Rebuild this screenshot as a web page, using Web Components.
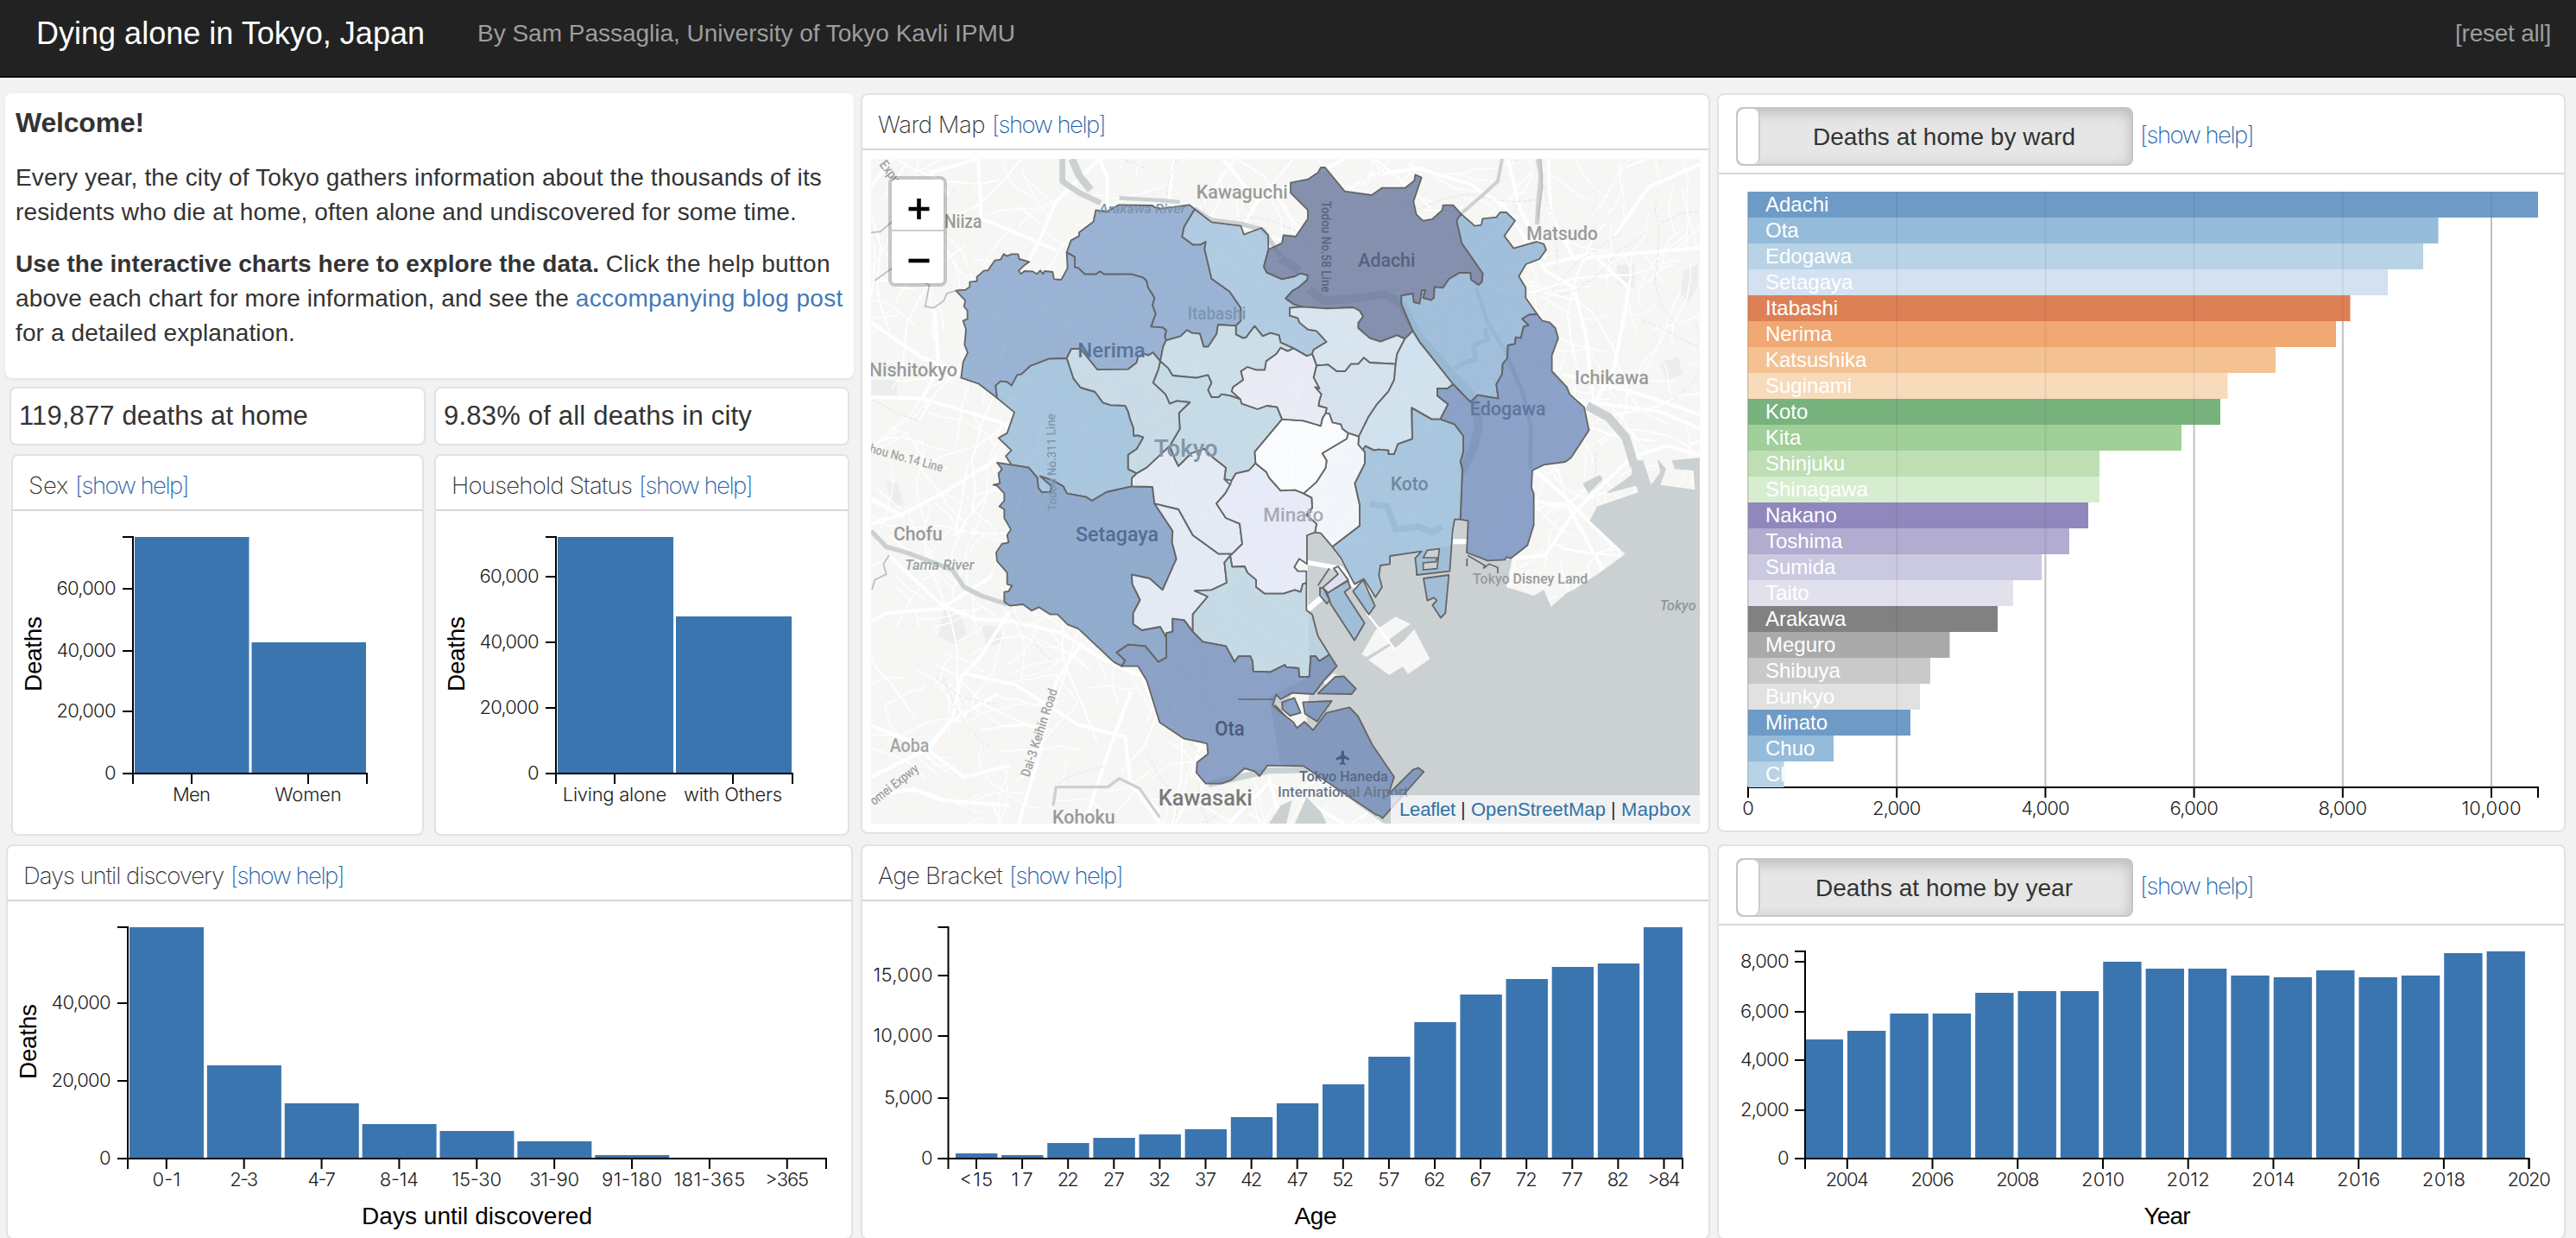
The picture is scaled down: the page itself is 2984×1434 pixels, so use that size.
<!DOCTYPE html>
<html lang="en">
<head>
<meta charset="utf-8">
<title>Dying alone in Tokyo, Japan</title>
<style>
html,body{margin:0;height:1434px;overflow:hidden;background:#f2f2f2}
body{font-family:"Liberation Sans",Arial,sans-serif;font-size:28px;color:#333}
</style>
</head>
<body>
<tokyo-dashboard></tokyo-dashboard>
<script>
const LIGHT = 'Inter,"Liberation Sans",sans-serif';
const BLUE = '#3b75af';

/* one line of text set to a given measure */
customElements.define('fit-line', class extends HTMLElement {
  connectedCallback() {
    if (this.shadowRoot) return;
    this.attachShadow({mode: 'open'}).innerHTML =
      '<style>:host{display:inline-block;white-space:nowrap}span{display:inline-block;white-space:pre}</style><span><slot></slot></span>';
    const span = this.shadowRoot.querySelector('span');
    const want = +this.getAttribute('w');
    const fit = () => {
      const n = this.textContent.length;
      span.style.letterSpacing = '0px';
      const have = span.getBoundingClientRect().width;
      if (want && n && have) span.style.letterSpacing = ((want - have) / n) + 'px';
      if (want) this.style.width = want + 'px';
    };
    fit();
    requestAnimationFrame(fit);
  }
});

customElements.define('top-bar', class extends HTMLElement {
  constructor() {
    super();
    this.attachShadow({mode: 'open'}).innerHTML = `<style>
      :host{display:flex;box-sizing:border-box;height:90px;background:#222;border-bottom:2px solid #060606;padding:0 29px 0 42px;color:#9d9d9d;font-size:28px;align-items:flex-start}
      .t{color:#fff;font-size:36px;line-height:40px;padding-top:19px;margin-right:61px}
      .s{line-height:32px;padding-top:23px;flex:1}
      .r{line-height:32px;padding-top:23px}
    </style><div class="t"><slot name="title"></slot></div><div class="s"><slot name="by"></slot></div><div class="r"><slot name="action"></slot></div>`;
  }
});

customElements.define('welcome-card', class extends HTMLElement {
  constructor() {
    super();
    this.attachShadow({mode: 'open'}).innerHTML = `<style>
      :host{display:block;box-sizing:border-box;height:330px;background:#fff;border-radius:8px;box-shadow:0 2px 3px rgba(0,0,0,.06);padding:16px 0 0 12px}
      h1{font-size:32px;line-height:36px;margin:0 0 26px}
      p{margin:0 0 20px;line-height:40px;white-space:nowrap}
      a{color:#4279b8}
    </style>
    <h1><fit-line w="149">Welcome!</fit-line></h1>
    <p><fit-line w="934">Every year, the city of Tokyo gathers information about the thousands of its</fit-line><br>
    <fit-line w="905">residents who die at home, often alone and undiscovered for some time.</fit-line></p>
    <p><b><fit-line w="676">Use the interactive charts here to explore the data.</fit-line></b> <fit-line w="260">Click the help button</fit-line><br>
    <fit-line w="641">above each chart for more information, and see the</fit-line> <a><fit-line w="310">accompanying blog post</fit-line></a><br>
    <fit-line w="324">for a detailed explanation.</fit-line></p>`;
  }
});

customElements.define('stat-card', class extends HTMLElement {
  constructor() {
    super();
    this.attachShadow({mode: 'open'}).innerHTML = `<style>
      :host{display:flex;align-items:center;box-sizing:border-box;flex:1;height:68px;background:#fff;border:2px solid #e2e2e2;border-radius:8px;padding-left:9px;font-size:31px}
    </style><slot></slot>`;
  }
});

customElements.define('chart-card', class extends HTMLElement {
  constructor() {
    super();
    this.attachShadow({mode: 'open'}).innerHTML = `<style>
      :host{display:block;box-sizing:border-box;background:#fff;border:2px solid #e2e2e2;border-radius:8px;overflow:hidden}
      header{display:flex;box-sizing:border-box;height:64px;border-bottom:2px solid #d6d6d6;padding:6px 0 0 18px;align-items:center;color:#333;font-family:${LIGHT};font-weight:200;gap:8px;font-size:27.500px}
      :host([tall]) header{height:92px;padding:14px 0 0 20px;align-items:flex-start}
      .help{color:#1f63ad}
      :host([tall]) .help{padding-top:14px;line-height:36px}
    </style><header><slot name="title"></slot><span class="help"><fit-line w="131">[show help]</fit-line></span></header><slot></slot>`;
  }
});

customElements.define('flip-switch', class extends HTMLElement {
  constructor() {
    super();
    this.attachShadow({mode: 'open'}).innerHTML = `<style>
      :host{display:flex;box-sizing:border-box;width:460px;height:68px;border:2px solid #c6c6c6;border-radius:8px;background:#e6e6e6;box-shadow:inset 0 4px 16px rgba(0,0,0,.2);font:28px "Liberation Sans",sans-serif;color:#333;overflow:hidden}
      i{width:24px;background:#fff;border-right:2px solid #ccc;border-radius:8px}
      div{flex:1;display:flex;align-items:center;justify-content:center;padding:2px 4px 0 0}
    </style><i></i><div><slot></slot></div>`;
  }
});

const ruler = document.createElement('canvas').getContext('2d');
function measure(t, size) { ruler.font = size + 'px "Liberation Sans"'; return ruler.measureText(t).width; }
function tick(t, x, y, anchor) {
  return `<text class="k" x="${x}" y="${y}" text-anchor="${anchor}" textLength="${(measure(t, 22) * 1.025).toFixed(1)}">${t.replace('<', '&lt;')}</text>`;
}
const CHART_CSS = `:host{display:block}svg{display:block}
  .k{font:300 22px ${LIGHT};fill:#1c1c1c}.t{font:28px "Liberation Sans",sans-serif;fill:#000}
  .w{font:24px "Liberation Sans",sans-serif;fill:#fff}path.a{fill:none;stroke:#000;stroke-width:2}`;

const range = (n, f) => Array.from({length: n}, (_, i) => f(i));
const CHARTS = {
  sex: {box: [15, 592, 474, 374], ax: 154, top: 622, base: 896, end: 425, lx: 134.5,
    y: [['60,000', 682], ['40,000', 754], ['20,000', 824], ['0', 896]],
    x: [['Men', 222], ['Women', 357]],
    bars: [[156, 132.5, 622], [291.5, 132.5, 744]], v: [47.5, 757.5]},
  house: {box: [505, 592, 477, 374], ax: 644, top: 622, base: 896, end: 918, lx: 624.5,
    y: [['60,000', 668], ['40,000', 744], ['20,000', 820], ['0', 896]],
    x: [['Living alone', 712], ['with Others', 849]],
    bars: [[646, 134, 622], [783, 134, 714]], v: [538, 757.5]},
  days: {box: [9, 1044, 977, 390], ax: 148, top: 1074, base: 1342, end: 957, lx: 128.5,
    y: [['40,000', 1162], ['20,000', 1252], ['0', 1342]],
    x: ['0-1', '2-3', '4-7', '8-14', '15-30', '31-90', '91-180', '181-365', '>365'].map((t, i) => [t, 192.8 + i * 89.87]),
    bars: [1074, 1234, 1278, 1302, 1310, 1322, 1338].map((t, i) => [150 + i * 89.87, 86, t]),
    v: [41.5, 1206.5], h: ['Days until discovered', 552.5, 267]},
  age: {box: [999, 1044, 980, 390], ax: 1098.5, top: 1074, base: 1342, end: 1949, lx: 1080.5,
    y: [['15,000', 1130], ['10,000', 1200], ['5,000', 1272], ['0', 1342]],
    x: ['<15', '17', '22', '27', '32', '37', '42', '47', '52', '57', '62', '67', '72', '77', '82', '>84'].map((t, i) => [t, 1131 + i * 53.1]),
    bars: [1336, 1338, 1324, 1318, 1314, 1308, 1294, 1278, 1256, 1224, 1184, 1152, 1134, 1120, 1116, 1074].map((t, i) => [1107 + i * 53.13, i == 15 ? 45 : 48.4, t]),
    h: ['Age', 1524, 49]},
  year: {box: [1991, 1072, 979, 362], ax: 2091, top: 1102, base: 1342, end: 2929.5, lx: 2072.5,
    y: [['8,000', 1114], ['6,000', 1172], ['4,000', 1228], ['2,000', 1286], ['0', 1342]],
    x: range(9, i => ['' + (2004 + 2 * i), 2139.8 + i * 98.73]),
    bars: [1204, 1194, 1174, 1174, 1150, 1148, 1148, 1114, 1122, 1122, 1130, 1132, 1124, 1132, 1130, 1104, 1102].map((t, i) => [i ? 2140 + (i - 1) * 49.37 : 2092, i ? 44.4 : 43, t]),
    h: ['Year', 2510.5, 54]}
};

customElements.define('bar-chart', class extends HTMLElement {
  connectedCallback() {
    if (this.shadowRoot) return;
    const c = CHARTS[this.getAttribute('data')];
    let s = '';
    for (const [x, w, t] of c.bars) s += `<rect x="${x}" y="${t}" width="${w}" height="${c.base - t}" fill="${BLUE}"/>`;
    s += `<path class="a" d="M${c.ax - 12} ${c.top}H${c.ax}V${c.base}H${c.ax - 12}"/>`;
    s += `<path class="a" d="M${c.ax} ${c.base + 12}V${c.base}H${c.end}V${c.base + 12}"/>`;
    for (const [t, y] of c.y) s += `<path class="a" d="M${c.ax - 12} ${y}H${c.ax}"/>` + tick(t, c.lx, y + 6.5, 'end');
    for (const [t, x] of c.x) s += `<path class="a" d="M${x} ${c.base}V${c.base + 12}"/>` + tick(t, x, c.base + 32, 'middle');
    if (c.v) s += `<text class="t" transform="translate(${c.v[0]} ${c.v[1]}) rotate(-90)" text-anchor="middle" textLength="87">Deaths</text>`;
    if (c.h) s += `<text class="t" x="${c.h[1]}" y="1418" text-anchor="middle" textLength="${c.h[2]}">${c.h[0]}</text>`;
    this.attachShadow({mode: 'open'}).innerHTML = `<style>${CHART_CSS}</style><svg width="${c.box[2]}" height="${c.box[3]}" viewBox="${c.box.join(' ')}">${s}</svg>`;
  }
});

const WARDS = [['Adachi', 2940, '#6e9bc6'], ['Ota', 2824.5, '#95bbda'], ['Edogawa', 2807, '#b8d3e5'], ['Setagaya', 2766, '#d4e1f1'],
  ['Itabashi', 2722.5, '#de8055'], ['Nerima', 2706, '#f1a873'], ['Katsushika', 2636, '#f4c292'], ['Suginami', 2580.5, '#f7dbba'],
  ['Koto', 2572, '#78b37e'], ['Kita', 2527, '#a0cf98'], ['Shinjuku', 2432, '#bddfb3'], ['Shinagawa', 2432, '#d7edd0'],
  ['Nakano', 2419, '#9088bc'], ['Toshima', 2397, '#b1acd0'], ['Sumida', 2365, '#cac9e0'], ['Taito', 2332, '#e1e0ed'],
  ['Arakawa', 2314, '#818181'], ['Meguro', 2258.5, '#aaaaaa'], ['Shibuya', 2236, '#c9c9c9'], ['Bunkyo', 2224, '#e1e1e1'],
  ['Minato', 2213, '#6e9bc6'], ['Chuo', 2124, '#95bbda'], ['Chiyoda', 2066.5, '#b8d3e5']];

customElements.define('ward-chart', class extends HTMLElement {
  constructor() {
    super();
    let s = '';
    const xs = range(6, i => 2025 + i * 172.2);
    for (const x of xs) s += `<path d="M${x} 222V912" stroke="#cdcdcd" stroke-width="2"/>`;
    s += `<path class="a" d="M2025 924V912H2940V924"/>`;
    WARDS.forEach(([n, e, f], i) => { s += `<rect x="2025" y="${222 + i * 30}" width="${e - 2025}" height="30" fill="${f}"/>`; });
    for (const x of xs) s += `<path d="M${x} 222V912" stroke="#000" stroke-opacity=".06" stroke-width="2"/>`;
    WARDS.forEach(([n], i) => { s += `<text class="w" x="2045" y="${245 + i * 30}">${n}</text>`; });
    xs.forEach((x, i) => { s += `<path class="a" d="M${x} 912V924"/>` + tick(i ? 2 * i + ',000' : '0', x, 944, 'middle'); });
    this.attachShadow({mode: 'open'}).innerHTML = `<style>${CHART_CSS}</style><svg width="979" height="760" viewBox="1991 202 979 760">${s}</svg>`;
  }
});

/* ward outlines: [fill, outline, outline, ...] */
const MAP = [
 ['#9ab3d3', '838,430 875,437 918,412 1035,414 1042,420 1065,425 1163,412 1182,427 1145,488 1138,523 1175,550 1202,550 1220,540 1216,565 1240,668 1303,713 1342,770 1342,815 1325,832 1263,828 1258,860 1228,905 1213,905 1200,860 1172,857 1155,847 1133,868 1082,883 1078,868 1083,848 1070,838 1030,835 1046,790 1035,760 1042,735 1020,700 1014,675 1003,665 963,653 867,653 852,643 838,653 800,653 778,632 765,628 765,593 737,577 752,535 780,520 780,508 830,470'],
 ['#9ab3d3', '737,577 765,593 765,628 778,632 800,653 838,653 852,643 867,653 963,653 1003,665 1014,675 1020,700 1042,735 1035,760 1046,790 1030,835 1070,838 1083,848 1078,868 1082,883 1072,905 1062,955 1037,925 1020,935 1008,930 985,940 980,960 950,983 843,984 785,912 753,912 737,945 675,947 610,972 580,1000 565,1003 545,1040 530,1027 507,1025 490,1040 495,1083 430,1033 370,1013 377,958 393,925 382,898 387,845 377,815 392,808 392,780 380,765 385,745 352,710 385,707 400,697 400,680 425,677 425,662 450,640 463,640 487,605 507,602 518,583 530,590 545,583 568,583 572,600 607,610 590,622 570,640 578,652 590,642 618,643 633,652 645,640 655,652 660,642 688,645 693,670 718,672 740,632'],
 ['#b0cbe1', '1182,427 1240,472 1342,485 1353,515 1413,492 1437,517 1438,567 1422,627 1432,647 1485,670 1530,660 1550,650 1575,657 1573,672 1545,697 1520,712 1498,737 1525,757 1555,766 1512,770 1512,797 1540,805 1545,820 1575,845 1605,850 1640,888 1595,915 1590,930 1572,937 1525,910 1480,890 1475,865 1445,857 1418,868 1390,833 1360,873 1350,875 1325,862 1325,832 1342,815 1342,770 1303,713 1240,668 1216,565 1220,540 1202,550 1175,550 1138,523 1145,488'],
 ['#8490ae', '1438,567 1485,545 1490,517 1533,522 1575,460 1575,430 1515,370 1515,335 1575,323 1610,300 1620,282 1635,282 1703,365 1797,378 1832,353 1913,353 1945,328 1948,307 1970,317 1942,400 1952,445 1975,467 2007,462 2042,430 2045,413 2080,413 2107,443 2092,467 2110,545 2183,650 2180,680 2168,690 2142,672 2140,648 2102,648 2065,670 2045,700 2015,697 2013,735 2003,743 1975,735 1983,708 1972,708 1963,755 1943,750 1940,720 1900,727 1900,757 1940,850 1912,877 1885,865 1827,887 1790,875 1750,840 1750,822 1767,800 1755,780 1733,768 1640,772 1555,766 1525,757 1498,737 1520,712 1545,697 1573,672 1575,657 1550,650 1530,660 1485,670 1432,647 1422,627'],
 ['#d8e4ee', '1555,766 1640,772 1733,768 1755,780 1767,800 1750,822 1750,840 1790,875 1827,887 1885,865 1912,877 1885,930 1880,965 1790,960 1770,943 1750,965 1725,965 1705,990 1675,990 1645,967 1605,970 1595,940 1590,930 1595,915 1640,888 1605,850 1575,845 1545,820 1540,805 1512,797 1512,770'],
 ['#d5e2ed', '1605,970 1645,967 1675,990 1705,990 1725,965 1750,965 1770,943 1790,960 1880,965 1875,1020 1855,1060 1815,1105 1785,1150 1752,1217 1715,1205 1695,1190 1690,1175 1660,1168 1650,1138 1637,1135 1640,1118 1612,1110 1615,1092 1622,1070 1600,1045 1615,1050 1595,1012'],
 ['#d1e1ec', '1940,850 1912,877 1885,930 1880,965 1875,1020 1855,1060 1815,1105 1785,1150 1752,1217 1750,1245 1765,1265 1775,1250 1805,1265 1820,1262 1855,1265 1855,1278 1875,1278 1888,1243 1938,1225 1936,1117 2005,1157 2035,1157 2062,1105 2025,1075 2025,1050 2060,1050 2080,1035 1965,890'],
 ['#a1bfda', '2107,443 2155,485 2178,482 2182,460 2230,455 2243,438 2265,438 2295,467 2258,520 2290,563 2370,540 2395,548 2403,568 2380,600 2333,618 2308,660 2332,700 2332,735 2372,792 2345,793 2320,808 2342,830 2325,835 2315,875 2297,872 2295,895 2270,900 2268,945 2252,965 2250,1000 2230,1035 2237,1085 2165,1073 2140,1097 2080,1035 1965,890 1940,850 1900,757 1900,727 1940,720 1943,750 1963,755 1972,708 1983,708 1975,735 2003,743 2013,735 2015,697 2045,700 2065,670 2102,648 2140,648 2142,672 2168,690 2180,680 2183,650 2110,545 2092,467'],
 ['#8ba1c7', '2372,792 2390,815 2415,820 2435,840 2445,875 2423,935 2423,990 2475,1045 2485,1070 2535,1115 2552,1195 2490,1290 2470,1305 2395,1315 2355,1335 2352,1395 2360,1415 2360,1525 2338,1595 2280,1640 2265,1636 2260,1645 2200,1648 2127,1620 2132,1510 2105,1505 2112,1330 2105,1305 2115,1270 2115,1215 2085,1175 2035,1157 2062,1105 2025,1075 2025,1050 2060,1050 2080,1035 2140,1097 2165,1073 2237,1085 2230,1035 2250,1000 2252,965 2268,945 2270,900 2295,895 2297,872 2315,875 2325,835 2342,830 2320,808 2345,793'],
 ['#a9c6de', '1936,1117 2005,1157 2035,1157 2085,1175 2115,1215 2115,1270 2105,1305 2112,1330 2105,1505 2085,1505 2078,1545 2068,1685 1953,1698 1953,1682 1948,1640 1970,1616 1860,1632 1860,1660 1827,1665 1822,1700 1833,1740 1810,1775 1770,1712 1737,1730 1690,1640 1660,1600 1755,1527 1755,1455 1738,1380 1773,1310 1773,1270 1765,1265 1775,1250 1805,1265 1820,1262 1855,1265 1855,1278 1875,1278 1888,1243 1938,1225',
   '1977,1710 2065,1698 2053,1830 2037,1847 2008,1803 2023,1787 2013,1777 1990,1787', '1655,1800 1642,1760 1715,1718 1722,1742 1702,1757 1772,1865 1737,1925', '1732,1755 1767,1715 1808,1805 1787,1835', '1617,1742 1630,1745 1650,1785 1642,1798 1617,1770'],
 ['#f2f6fb', '1752,1217 1750,1245 1773,1270 1773,1310 1738,1380 1755,1455 1755,1527 1660,1600 1620,1553 1600,1550 1605,1520 1570,1490 1590,1465 1588,1430 1560,1415 1605,1375 1637,1325 1640,1300 1625,1275 1710,1225 1715,1205'],
 ['#fafbfd', '1650,1138 1660,1168 1690,1175 1695,1190 1715,1205 1710,1225 1625,1275 1640,1300 1637,1325 1605,1375 1560,1415 1530,1403 1480,1405 1440,1360 1430,1340 1393,1310 1390,1270 1485,1157 1560,1162 1620,1180 1625,1155 1637,1135'],
 ['#e8ebf4', '1572,937 1590,930 1605,970 1595,1012 1615,1050 1600,1045 1622,1070 1615,1092 1612,1110 1640,1118 1637,1135 1625,1155 1620,1180 1560,1162 1485,1157 1468,1115 1433,1110 1400,1122 1345,1103 1340,1087 1310,1060 1315,1045 1350,1020 1342,990 1365,975 1395,985 1425,985 1430,955 1465,930 1480,908 1505,920 1525,910'],
 ['#ccdfe9', '1082,883 1133,868 1155,847 1172,857 1200,860 1213,905 1228,905 1258,860 1263,828 1325,832 1325,862 1350,875 1360,873 1390,833 1418,868 1445,857 1475,865 1480,890 1525,910 1505,920 1480,908 1465,930 1430,955 1425,985 1395,985 1365,975 1342,990 1350,1020 1315,1045 1310,1060 1340,1087 1305,1075 1275,1070 1265,1080 1240,1080 1228,1055 1240,1030 1228,1003 1188,1013 1105,1005 1090,980 1062,955 1072,905'],
 ['#c6dbe6', '1062,955 1090,980 1105,1005 1188,1013 1228,1003 1240,1030 1228,1055 1240,1080 1265,1080 1275,1070 1305,1075 1340,1087 1345,1103 1400,1122 1433,1110 1468,1115 1485,1157 1390,1270 1393,1310 1370,1335 1325,1345 1310,1370 1285,1365 1290,1325 1245,1290 1215,1260 1170,1275 1125,1320 1110,1290 1095,1250 1130,1190 1127,1135 1165,1098 1120,1093 1095,1103 1080,1070 1037,1030 1055,985'],
 ['#c8dbe5', '737,945 753,912 785,912 843,984 950,983 980,960 985,940 1008,930 1020,935 1037,925 1062,955 1055,985 1037,1030 1080,1070 1095,1103 1120,1093 1165,1098 1127,1135 1130,1190 1095,1250 1015,1325 980,1345 950,1330 950,1280 980,1260 1003,1220 985,1213 970,1215 968,1185 958,1160 950,1130 940,1110 890,1108 863,1100 835,1062 785,1047 760,1015'],
 ['#a9c6de', '737,945 760,1015 785,1047 835,1062 863,1100 890,1108 940,1110 950,1130 958,1160 968,1185 970,1215 985,1213 1003,1220 980,1260 950,1280 950,1330 980,1345 963,1362 963,1390 875,1410 825,1440 805,1427 738,1415 725,1390 690,1370 645,1355 685,1390 680,1410 650,1410 638,1395 635,1360 605,1325 545,1315 525,1285 545,1265 500,1222 530,1205 555,1133 495,1083 490,1040 507,1025 530,1027 545,1040 565,1003 580,1000 610,972 675,947'],
 ['#91abcd', '495,1308 545,1315 605,1325 635,1360 638,1395 650,1410 680,1410 685,1390 645,1355 690,1370 725,1390 738,1415 805,1427 825,1440 875,1410 963,1390 1035,1392 1042,1450 1105,1545 1103,1585 1118,1642 1070,1750 1025,1710 963,1697 965,1730 992,1785 968,1830 968,1868 998,1890 1062,1878 1083,1915 1083,1985 1055,2000 1010,1945 950,1940 910,1967 940,1995 928,2015 900,2000 778,1885 740,1870 705,1835 680,1835 640,1810 615,1822 585,1800 540,1805 520,1792 520,1757 535,1755 547,1735 530,1730 530,1690 495,1650 492,1620 512,1590 535,1585 530,1560 543,1540 520,1500 520,1470 503,1460 520,1440 520,1415 495,1388 482,1385 505,1380 500,1345 512,1330'],
 ['#e4eaf4', '963,1390 963,1362 980,1345 1015,1325 1095,1250 1110,1290 1125,1320 1170,1275 1215,1260 1245,1290 1290,1325 1285,1365 1305,1385 1288,1415 1257,1450 1290,1500 1338,1520 1347,1590 1312,1625 1265,1625 1175,1560 1125,1470 1042,1450 1035,1392'],
 ['#e3eaf4', '1042,1450 1125,1470 1175,1560 1265,1625 1312,1625 1285,1655 1293,1725 1240,1750 1182,1753 1227,1773 1175,1835 1175,1895 1145,1855 1105,1850 1105,1895 1083,1900 1083,1915 1062,1878 998,1890 968,1868 968,1830 992,1785 965,1730 963,1697 1025,1710 1070,1750 1118,1642 1103,1585 1105,1545'],
 ['#e7eaf6', '1393,1310 1430,1340 1440,1360 1480,1405 1530,1403 1560,1415 1588,1430 1590,1465 1570,1490 1605,1520 1600,1550 1572,1560 1572,1660 1545,1642 1528,1670 1540,1685 1570,1685 1570,1725 1557,1730 1550,1757 1530,1750 1490,1763 1425,1763 1395,1740 1395,1715 1365,1690 1355,1668 1312,1670 1305,1630 1312,1625 1347,1590 1338,1520 1290,1500 1257,1450 1288,1415 1305,1385 1310,1370 1325,1345 1370,1335', '1627,1742 1680,1695 1665,1675 1680,1668 1715,1715 1645,1760'],
 ['#c6dae5', '1305,1630 1312,1670 1355,1668 1365,1690 1395,1715 1395,1740 1425,1763 1490,1763 1530,1750 1550,1757 1557,1730 1570,1725 1570,1820 1590,1835 1610,1910 1650,1975 1615,1997 1602,1980 1585,1980 1580,2052 1545,2052 1543,2022 1500,2018 1495,2010 1445,2035 1385,2033 1383,1998 1375,1980 1335,1980 1320,2000 1290,1945 1210,1930 1175,1895 1175,1835 1227,1773 1182,1753 1240,1750 1293,1725 1285,1655'],
 ['#8ca1c5', '1083,1915 1083,1900 1105,1895 1105,1850 1145,1855 1175,1895 1210,1930 1290,1945 1320,2000 1335,1980 1375,1980 1383,1998 1385,2033 1445,2035 1495,2010 1500,2018 1543,2022 1545,2052 1580,2052 1585,1980 1602,1980 1615,1997 1650,1975 1676,2015 1630,2065 1595,2112 1520,2108 1480,2130 1465,2113 1453,2150 1480,2175 1525,2210 1537,2230 1563,2208 1593,2237 1640,2177 1720,2158 1750,2190 1800,2290 1875,2400 1855,2460 1940,2375 1958,2368 1978,2382 1835,2543 1825,2535 1810,2530 1560,2362 1435,2360 1407,2397 1390,2380 1355,2370 1310,2410 1275,2423 1220,2423 1188,2385 1190,2350 1228,2320 1225,2285 1210,2280 1145,2267 1060,2210 1015,2065 985,2015 928,2015 940,1995 910,1967 950,1940 1010,1945 1055,2000 1083,1985',
   '1610,2110 1670,2052 1700,2050 1742,2093 1727,2112', '1558,2140 1658,2136 1607,2207 1565,2180', '1485,2140 1528,2125 1550,2177 1513,2187 1487,2165']
];
const LABELS = [
 ['Kawaguchi', 1187, 390, 318, 68, '#9a9a9a'], ['Niiza', 312, 492, 130, 68, '#9a9a9a'], ['Nishitokyo', 50, 1007, 307, 68, '#9a9a9a'],
 ['Itabashi', 1157, 810, 203, 60, '#7b93b4'], ['Nerima', 775, 943, 235, 70, '#5b7396'], ['Tokyo', 1040, 1287, 222, 84, '#8295a4'],
 ['Adachi', 1750, 628, 198, 68, '#55617f'], ['Matsudo', 2335, 533, 248, 68, '#9a9a9a'], ['Edogawa', 2138, 1142, 264, 68, '#5f7599'],
 ['Ichikawa', 2502, 1035, 258, 68, '#9a9a9a'], ['Chofu', 135, 1577, 170, 68, '#999'], ['Setagaya', 768, 1580, 288, 70, '#536d93'],
 ['Minato', 1420, 1512, 210, 68, '#a7a9b6'], ['Koto', 1862, 1405, 132, 68, '#7088a0'], ['Ota', 1252, 2257, 103, 70, '#495b7d'],
 ['Aoba', 122, 2312, 137, 66, '#a5a5a5'], ['Kawasaki', 1055, 2500, 327, 80, '#7a7a7a'], ['Kohoku', 687, 2562, 218, 68, '#999'],
 ['Tokyo Disney Land', 2148, 1727, 400, 50, '#999'], ['Tokyo Haneda', 1545, 2414, 308, 50, '#5a6783'], ['International Airport', 1470, 2469, 455, 50, '#6e7788'],
 ['Tama River', 175, 1680, 240, 50, '#9aa3a3', 'i'], ['Arakawa River', 850, 442, 300, 46, '#7d93ac', 'i'], ['Tokyo Bay', 2798, 1822, 215, 50, '#8d9999', 'i']
];
const TURNED = [
 ['Todou No.58 Line', 1622, 398, 90, 318, 44, '#59647f'], ['Todou No.311 Line', 702, 1475, -91, 338, 42, '#8095ae'],
 ['Dai-3 Keihin Road', 607, 2402, -72, 318, 46, '#a0a0a0'], ['omei Expwy', 68, 2500, -38, 200, 46, '#a0a0a0'],
 ['hou No.14 Line', 50, 1272, 15, 262, 44, '#a5a5a5'], ['Expw', 84, 272, 52, 96, 46, '#a0a0a0']
];
const MAJOR = [
 'M57 350L130 250M260 300L430 252L440 460L540 500L700 570M260 300L330 380M850 252L700 400L640 540L600 620M850 252L880 320L875 420M57 820L230 940L400 1010L560 1090',
 'M57 1080L235 1085L500 1165L560 1200M235 1085L290 980L280 780M57 1430L160 1490L330 1400L500 1290M160 1490L57 1520M120 1630L300 1800L420 1850L550 1860L720 1900L860 1990L1000 2050L1060 2200L1200 2290L1170 2400',
 'M57 1860L110 1830L300 1815L480 1700M540 1820L440 1980L370 2050L340 2200L260 2300L57 2400M57 2220L250 2300L330 2210L500 2110M570 2560L640 2330L700 2070L790 1930M380 2040L560 2080L780 2220L940 2260L960 2430L1060 2520M800 2560L880 2320L960 2100',
 'M260 2310L380 2400L540 2360M57 2470L200 2440L300 2480L540 2500M950 2400L1060 2560M1300 2562L1440 2420L1560 2480L1700 2562M1440 2400L1480 2562',
 'M1110 252L1090 400M1280 252L1400 400L1330 520M1400 400L1510 340M1470 380L1700 252M1790 310L1960 285L2140 340L2260 420L2330 530L2400 640L2500 700L2540 860L2570 1100L2800 1130L2937 1190M2270 252L2310 420L2400 600M2410 252L2420 450L2500 600L2937 560',
 'M2640 520L2760 350L2937 270M2400 620L2560 580L2690 700L2640 980L2560 1120L2380 1010M2460 1000L2700 1060L2937 1140M2280 1640L2400 1630L2500 1480L2700 1290L2820 1250L2937 1280M2360 1330L2440 1400L2640 1600M2360 1440L2480 1460L2600 1680'
];

customElements.define('ward-map', class extends HTMLElement {
  constructor() {
    super();
    let seed = 11;
    const rnd = () => (seed = (seed * 16807) % 2147483647) / 2147483647;
    const streets = (n, wide) => {
      let d = '';
      for (let i = 0; i < n; i++) {
        let x = 57 + rnd() * 2880, y = 252 + rnd() * 2310, a = rnd() * 6.28;
        d += `M${x | 0} ${y | 0}`;
        const k = 3 + rnd() * 5 | 0;
        for (let j = 0; j < k; j++) { a += (rnd() - .5) * .9; const l = wide * (.5 + rnd()); x += Math.cos(a) * l; y += Math.sin(a) * l; d += `L${x | 0} ${y | 0}`; }
      }
      return d;
    };
    /* solve for the overlay colour that gives the wanted tone on top of the land */
    const A = .78, land = [246, 246, 244];
    const over = hex => {
      const c = [1, 3, 5].map((p, i) => Math.max(0, Math.min(255, Math.round((parseInt(hex.substr(p, 2), 16) - (1 - A) * land[i]) / A))));
      return `rgba(${c.join()},${A})`;
    };
    let wards = '';
    for (const [f, ...ps] of MAP) for (const p of ps) wards += `<polygon points="${p}" fill="${over(f)}"/>`;
    let text = '';
    for (const [t, x, y, w, s, c, i] of LABELS) text += `<text x="${x}" y="${y}" textLength="${w}" lengthAdjust="spacingAndGlyphs" font-size="${s}" fill="${c}"${i ? ' font-style="italic"' : ''}>${t}</text>`;
    for (const [t, x, y, r, w, s, c] of TURNED) text += `<text transform="translate(${x} ${y}) rotate(${r})" textLength="${w}" lengthAdjust="spacingAndGlyphs" font-size="${s}" fill="${c}">${t}</text>`;
    const W = '#cbd1d2';
    this.attachShadow({mode: 'open'}).innerHTML = `<style>
      :host{display:block;position:relative;width:960px;height:770px;margin:10px;overflow:hidden}
      svg{display:block}
      text{font-family:Roboto,sans-serif;font-weight:500}
      .zoom{position:absolute;left:20px;top:20px;width:60px;height:120px;border:4px solid rgba(0,0,0,.2);border-radius:8px;background:#fff;background-clip:padding-box;display:flex;flex-direction:column}
      .zoom svg{width:60px;height:60px}
      .zoom svg:first-child{height:58px;border-bottom:2px solid #ccc}
      .credit{position:absolute;right:0;bottom:0;height:33px;width:358px;box-sizing:border-box;padding:0 0 0 10px;background:rgba(255,255,255,.7);font-size:22px;line-height:33px;color:#333;white-space:nowrap}
      .credit a{color:#3072a6}
    </style>
    <svg width="960" height="770" viewBox="57 252 2880 2310">
      <rect x="57" y="252" width="2880" height="2310" fill="#f6f6f4"/>
      <g fill="#ebeeed"><path d="M57 1020h90v55h-90zM310 1820l60 20 20 60-40 40-60-30zM440 1870l60 10 20 50-60 20zM2650 620l60 0 0 80-60 -10zM2880 640l50 -20 0 70-30 60-30-30zM2800 960l60 -20 20 60-60 20zM110 1370l40 10 20 70-40 10z"/></g>
      <g fill="none" stroke="#fff" stroke-linejoin="round">
        <path d="${streets(560, 45)}" stroke-width="4"/>
        <path d="${streets(60, 110)}" stroke-width="6"/>
        <path d="${MAJOR.join('')}" stroke-width="12"/>
      </g>
      <path d="${streets(60, 60)}" fill="none" stroke="#dfe2e1" stroke-width="2.5" stroke-dasharray="14 6"/>
      <path d="M400 252V2562M2573 252V2562" stroke="#efefed" stroke-width="2"/>
      <g fill="none" stroke="${W}" stroke-linejoin="round">
        <path d="M722 252L722 330L780 370L855 405" stroke-width="20"/><path d="M755 252L780 310L820 360" stroke-width="26"/>
        <path d="M920 388L1060 396L1130 402" stroke-width="14"/><path d="M1180 425L1240 465L1345 478L1420 500L1480 590" stroke-width="16"/>
        <path d="M1480 598L1545 640M1580 705L1630 745L1730 738L1840 722L1900 755" stroke-width="30"/>
        <path d="M2375 252L2385 310L2375 420L2372 480" stroke-width="16"/><path d="M2250 252L2235 330L2180 380L2110 440" stroke-width="12"/>
        <path d="M2160 700L2200 820L2260 920L2320 1060L2350 1180L2348 1330" stroke-width="14"/>
        <path d="M1900 755L1960 870L2085 1010L2150 1080L2170 1180L2150 1260L2110 1340" stroke-width="30"/>
        <path d="M2085 980L2120 960L2160 950L2150 900L2200 880L2190 840" stroke-width="16"/>
        <path d="M2545 1110L2620 1150L2680 1220L2710 1320" stroke-width="30"/>
        <path d="M57 1545L110 1600L180 1620L340 1680L380 1740L440 1770L530 1800" stroke-width="16"/>
        <path d="M690 2500L700 2435L880 2435L920 2405L990 2440L1060 2540" stroke-width="10"/>
        <path d="M1230 2425L1440 2378L1580 2375" stroke-width="22"/><path d="M1560 2330L1550 2200" stroke-width="12"/>
      </g>
      <g stroke="#b9bdbd" stroke-width="5" fill="none"><path d="M57 508L90 505L130 470M70 675L130 632L260 690L245 765L275 770L310 745L320 720L370 705M120 1630L100 1660L110 1695L70 1715L60 1750M2385 252L2390 350L2375 460"/></g>
      <path fill="${W}" d="M1573 1560L1600 1548L1625 1553L1737 1720L1810 1775L1833 1740L1822 1700L1827 1665L1860 1660L1860 1632L2078 1595L2085 1505L2132 1505L2132 1620L2200 1650L2285 1640L2265 1740L2360 1770L2395 1750L2420 1808L2475 1760L2500 1748L2590 1690L2678 1625L2555 1510L2580 1460L2725 1410L2715 1388L2610 1415L2700 1350L2700 1300L2740 1300L2768 1385L2800 1340L2790 1295L2820 1330L2800 1385L2920 1402L2915 1335L2850 1330L2840 1300L2937 1290V2562H1840L1560 2362L1480 2360L1440 2120L1580 2052Z"/>
      <path fill="${W}" d="M1530 2562L1570 2470L1620 2520L1640 2562zM1440 2562L1480 2500L1520 2480L1500 2562zM2530 1380l60-30 10 15-50 50z"/>
      <g fill="#f6f6f4"><path d="M1762 1975L1810 1890L1880 1843L1932 1868L1860 1920L1860 1935L1780 1982Z"/><path d="M1945 1886L1999 1990L1923 2042L1905 2017L1857 2045L1785 1993L1860 1945L1880 1950L1910 1925Z"/>
        <path d="M1572 2210L1530 2225L1480 2180L1520 2110L1580 2110L1570 2180ZM1630 2070L1665 2040L1680 2048L1640 2085Z"/></g>
      <g fill="none" stroke="#fff"><path d="M1780 1830L1880 1960" stroke-width="7"/><path d="M1545 1650L1690 1675L1740 1740" stroke-width="16"/><path d="M1572 1820L1625 1775" stroke-width="20"/><path d="M2075 1582H2132" stroke-width="18"/></g>
      <g stroke="#666" stroke-width="5.5" stroke-linejoin="round">${wards}</g>
      <path d="M1990 1612L2032 1607L2024 1676L1976 1680L1976 1656L2020 1652L2024 1638L1976 1638Z" fill="${W}" stroke="#666" stroke-width="5"/>
      <g fill="none" stroke="#666" stroke-width="5"><path d="M1333 2130H1455M1460 2150L1500 2190M2130 1630l60 35-5 10 20-15 30 12v20M2128 1640v28M1610 1735l40-60M1855 2460l-3-14"/></g>
      <g fill="none" stroke="#8fb3d0" stroke-width="22" stroke-opacity=".55"><path d="M1790 1450L1850 1460L1880 1540L1960 1530L2010 1550L2040 1530"/></g>
      ${text}
      <path fill="#4a5c80" d="M1696 2308c5 0 5 8 5 16l18 11v7l-18-6-1 12 6 6v5l-10-4-10 4v-5l6-6-1-12-18 6v-7l18-11c0-8 0-16 5-16z"/>
    </svg>
    <div class="zoom"><svg viewBox="0 0 60 58"><path d="M19.500 34H43.500M31.500 22V46" stroke="#000" stroke-width="4.600"/></svg><svg viewBox="0 0 60 60"><path d="M19.500 34H43.500" stroke="#000" stroke-width="4.600"/></svg></div>
    <div class="credit"><a><fit-line w="65">Leaflet</fit-line></a> | <a><fit-line w="156">OpenStreetMap</fit-line></a> | <a><fit-line w="81">Mapbox</fit-line></a></div>`;
  }
});

customElements.define('tokyo-dashboard', class extends HTMLElement {
  constructor() {
    super();
    this.attachShadow({mode: 'open'}).innerHTML = `<style>
      :host{display:block;height:1434px;overflow:hidden}
      main{display:grid;grid-template-columns:983px 984px 983px;column-gap:8px;padding:18px 0 0 6px}
      section{display:flex;flex-direction:column;min-width:0}
      .pair{display:flex;gap:10px;margin:10px 5px 0 5px}
      .pair stat-card:first-child{flex:0 0 482px}
      .charts{margin-left:7px;gap:12px}
      .one{width:478px}.two{width:481px}
      .days{margin:10px 1px 0}
      .map{height:858px}.age{margin-top:12px}
      .ward{height:856px}.year{margin-top:14px}
    </style>
    <top-bar><fit-line slot="title" w="450">Dying alone in Tokyo, Japan</fit-line><fit-line slot="by" w="623">By Sam Passaglia, University of Tokyo Kavli IPMU</fit-line><fit-line slot="action" w="111">[reset all]</fit-line></top-bar>
    <main>
      <section>
        <welcome-card></welcome-card>
        <div class="pair"><stat-card><fit-line w="335">119,877 deaths at home</fit-line></stat-card><stat-card><fit-line w="357">9.83% of all deaths in city</fit-line></stat-card></div>
        <div class="pair charts">
          <chart-card class="one"><fit-line slot="title" w="46">Sex</fit-line><bar-chart data="sex"></bar-chart></chart-card>
          <chart-card class="two"><fit-line slot="title" w="209">Household Status</fit-line><bar-chart data="house"></bar-chart></chart-card>
        </div>
        <chart-card class="days"><fit-line slot="title" w="232">Days until discovery</fit-line><bar-chart data="days"></bar-chart></chart-card>
      </section>
      <section>
        <chart-card class="map"><fit-line slot="title" w="124">Ward Map</fit-line><ward-map></ward-map></chart-card>
        <chart-card class="age"><fit-line slot="title" w="144">Age Bracket</fit-line><bar-chart data="age"></bar-chart></chart-card>
      </section>
      <section>
        <chart-card class="ward" tall><flip-switch slot="title"><fit-line w="304">Deaths at home by ward</fit-line></flip-switch><ward-chart></ward-chart></chart-card>
        <chart-card class="year" tall><flip-switch slot="title"><fit-line w="298">Deaths at home by year</fit-line></flip-switch><bar-chart data="year"></bar-chart></chart-card>
      </section>
    </main>`;
  }
});
</script>
</body>
</html>
